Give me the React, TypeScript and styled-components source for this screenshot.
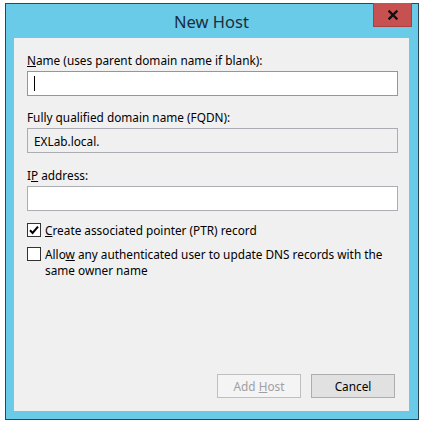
import React from 'react'
import styled, { createGlobalStyle } from 'styled-components'

const GlobalStyle = createGlobalStyle`
    html, body {
        margin: 0;
        padding: 0;
        background: #fff;
    }
    body {
        font-family: 'Noto Sans', 'Open Sans', sans-serif;
        font-size: 11.8px;
        color: #000;
    }
`

const CheckIcon: React.FC = () => (
    <svg viewBox='0 0 12 12' width='12' height='12'>
        <path d='M2 6.2 L4.6 9 L10 2.6' fill='none' stroke='#000' strokeWidth='2' />
    </svg>
)

const CloseIcon: React.FC = () => (
    <svg viewBox='0 0 10 10' width='10' height='10'>
        <path d='M1.5 1.5 L8.5 8.5 M8.5 1.5 L1.5 8.5' stroke='#111' strokeWidth='2.4' strokeLinecap='square' />
    </svg>
)

const App: React.FC = () => {
    return (
        <>
            <GlobalStyle />
            <Window>
                <TitleBar>
                    <span />
                    <Title>New Host</Title>
                    <CloseButton aria-label='Close'>
                        <CloseIcon />
                    </CloseButton>
                </TitleBar>
                <Client>
                    <Label $top={14}>
                        <Key>N</Key>ame (uses parent domain name if blank):
                    </Label>
                    <Field $focused>
                        <Caret />
                    </Field>
                    <Label $top={13}>Fully qualified domain name (FQDN):</Label>
                    <Field $disabled>EXLab.local.</Field>
                    <Label $top={14}>
                        I<Key>P</Key> address:
                    </Label>
                    <Field />
                    <CheckRow $top={12}>
                        <Box>
                            <CheckIcon />
                        </Box>
                        <CheckText>
                            <Key>C</Key>reate associated pointer (PTR) record
                        </CheckText>
                    </CheckRow>
                    <CheckRow $top={9}>
                        <Box />
                        <CheckText>
                            Allo<Key>w</Key> any authenticated user to update DNS records with the same owner name
                        </CheckText>
                    </CheckRow>
                    <Buttons>
                        <Button disabled>
                            Add <Key>H</Key>ost
                        </Button>
                        <Button $primary>Cancel</Button>
                    </Buttons>
                </Client>
            </Window>
        </>
    )
}

const Window = styled.div`
    margin: 3px 0 0 5px;
    width: 414px;
    height: 417px;
    box-sizing: border-box;
    border: 1px solid #2a4657;
    background: #6acbe8;
    padding: 0 9px 8px 8px;
    display: flex;
    flex-direction: column;
`

const TitleBar = styled.div`
    height: 34px;
    display: grid;
    grid-template-columns: 1fr auto 1fr;
    align-items: start;
`

const Title = styled.div`
    font-size: 16.5px;
    color: #1b2d3c;
    line-height: 20px;
    margin-top: 8px;
`

const CloseButton = styled.button`
    justify-self: end;
    margin: -1px -3px 0 0;
    width: 39px;
    height: 24px;
    padding: 0;
    border: 1px solid #a94040;
    border-top: none;
    background: #c75050;
    display: flex;
    align-items: center;
    justify-content: center;
`

const Client = styled.div`
    flex: 1;
    background: #f0f0f0;
    padding: 0 11px 13px 13px;
    display: flex;
    flex-direction: column;
`

const Key = styled.span`
    text-decoration: underline;
`

const Label = styled.div<{ $top: number }>`
    margin-top: ${(p) => p.$top}px;
    line-height: 16px;
    margin-bottom: 3px;
`

const Field = styled.div<{ $focused?: boolean; $disabled?: boolean }>`
    height: 25px;
    box-sizing: border-box;
    border: 1px solid ${(p) => (p.$focused ? '#7a9cc4' : '#abadb3')};
    background: ${(p) => (p.$disabled ? '#f0f0f0' : '#fff')};
    padding: 0 6px;
    display: flex;
    align-items: center;
`

const Caret = styled.span`
    width: 1px;
    height: 15px;
    background: #000;
`

const CheckRow = styled.div<{ $top: number }>`
    margin-top: ${(p) => p.$top}px;
    display: flex;
    align-items: flex-start;
    gap: 4px;
`

const Box = styled.span`
    flex: none;
    width: 14px;
    height: 14px;
    box-sizing: border-box;
    border: 1px solid #333;
    background: #fff;
    display: flex;
    align-items: center;
    justify-content: center;
`

const CheckText = styled.span`
    line-height: 16px;
    margin-top: -1px;
    padding-right: 14px;
`

const Buttons = styled.div`
    margin-top: auto;
    display: flex;
    justify-content: flex-end;
    gap: 10px;
    padding-right: 3px;
`

const Button = styled.button<{ $primary?: boolean }>`
    width: 84px;
    height: 24px;
    font-family: inherit;
    font-size: 11.8px;
    padding: 0;
    color: #000;
    border: 1px solid ${(p) => (p.$primary ? '#adadad' : '#bfbfbf')};
    background: ${(p) => (p.$primary ? '#e1e1e1' : '#f4f4f4')};
    &:disabled {
        color: #a0a0a0;
    }
`

export default App
